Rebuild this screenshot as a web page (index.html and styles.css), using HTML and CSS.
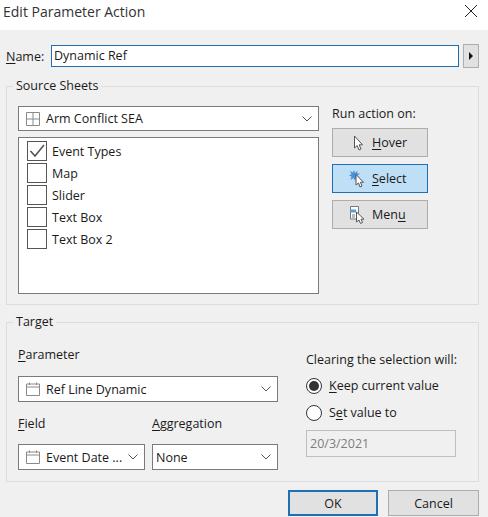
FILE: index.html
```html
<!DOCTYPE html>
<html>
<head>
	<meta charset="UTF-8">
	<title>Edit Parameter Action</title>
	<link rel="stylesheet" href="styles.css">
</head>
<body>
	<div class="titlebar">
		<span class="title">Edit Parameter Action</span>
		<svg class="close" width="14" height="14" viewBox="0 0 14 14"><path d="M1 1L13 13M13 1L1 13" stroke="#222" stroke-width="1" fill="none"/></svg>
	</div>

	<div class="dialog">

		<div class="name-row">
			<label class="name-label"><u>N</u>ame:</label>
			<div class="name-input">Dynamic Ref</div>
			<div class="name-arrow"><svg width="6" height="8" viewBox="0 0 6 8"><path d="M1 0L5 4L1 8Z" fill="#111"/></svg></div>
		</div>

		<fieldset class="group source">
			<legend>Source Sheets</legend>
			<div class="source-left">
				<div class="combo combo-sheet">
					<svg class="combo-icon" width="14" height="14" viewBox="0 0 14 14"><path d="M.5.5H13.500V13.500H.5ZM7 .5V13.500M.5 7H13.500" stroke="#8a8a8a" fill="none"/></svg>
					<span class="combo-text">Arm Conflict SEA</span>
					<svg class="chevron" width="10" height="6" viewBox="0 0 10 6"><path d="M.5 .5L5 5L9.500 .5" stroke="#555" fill="none"/></svg>
				</div>
				<div class="list">
					<div class="list-row">
						<span class="check"><svg width="18" height="18" viewBox="0 0 18 18"><path d="M2.500 9L7 14L16 3" stroke="#555" stroke-width="1.600" fill="none"/></svg></span>
						<span>Event Types</span>
					</div>
					<div class="list-row"><span class="check"></span><span>Map</span></div>
					<div class="list-row"><span class="check"></span><span>Slider</span></div>
					<div class="list-row"><span class="check"></span><span>Text Box</span></div>
					<div class="list-row"><span class="check"></span><span>Text Box 2</span></div>
				</div>
			</div>
			<div class="source-right">
				<div class="run-label">Run action on:</div>
				<div class="btn run-btn">
					<svg class="run-icon" width="18" height="18" viewBox="0 0 18 18"><path d="M5.500 2V14L8.200 11.500L10 16L12 15L10.200 10.800H13.500Z" fill="#fff" stroke="#555"/></svg>
					<span><u>H</u>over</span>
				</div>
				<div class="btn run-btn active">
					<svg class="run-icon" width="18" height="18" viewBox="0 0 18 18"><path d="M5 0L6 3L8.500 .5L8 3.500L11 3.500L8.500 5.500L10.500 8L7.500 7.500L6 10.500L4.500 8L1.500 10L2.500 6.500L0 5.500L2.500 4L1 1L4 2.500Z" fill="#4a8fd8"/><path d="M7 4.500V15L9.500 13L11 17L13 16L11.400 12.300H14.500Z" fill="#fff" stroke="#555"/></svg>
					<span><u>S</u>elect</span>
				</div>
				<div class="btn run-btn">
					<svg class="run-icon" width="18" height="18" viewBox="0 0 18 18"><path d="M1.500 .5H9.500V13H1.500Z" fill="#fff" stroke="#777"/><path d="M1 3.500H7V6.500H1Z" fill="#5a9be0"/><path d="M3 9H6M3 11H6" stroke="#777"/><path d="M7.500 6V16L10 14L11.500 17.500L13.500 16.500L12 13.200H15Z" fill="#fff" stroke="#555"/></svg>
					<span>Men<u>u</u></span>
				</div>
			</div>
		</fieldset>

		<fieldset class="group target">
			<legend>Target</legend>
			<div class="target-left">
				<div class="field-label"><u>P</u>arameter</div>
				<div class="combo combo-param">
					<svg class="combo-icon" width="14" height="14" viewBox="0 0 14 14"><path d="M.5 2H13.500V13.500H.5ZM.5 5H13.500M3.500 .5V3M10.500 .5V3" stroke="#8a8a8a" fill="none"/></svg>
					<span class="combo-text">Ref Line Dynamic</span>
					<svg class="chevron" width="10" height="6" viewBox="0 0 10 6"><path d="M.5 .5L5 5L9.500 .5" stroke="#555" fill="none"/></svg>
				</div>
				<div class="field-row">
					<div class="field-col field-col-date">
						<div class="field-label field-label-low"><u>F</u>ield</div>
						<div class="combo">
							<svg class="combo-icon" width="14" height="14" viewBox="0 0 14 14"><path d="M.5 2H13.500V13.500H.5ZM.5 5H13.500M3.500 .5V3M10.500 .5V3" stroke="#8a8a8a" fill="none"/></svg>
							<span class="combo-text">Event Date ...</span>
							<svg class="chevron" width="10" height="6" viewBox="0 0 10 6"><path d="M.5 .5L5 5L9.500 .5" stroke="#555" fill="none"/></svg>
						</div>
					</div>
					<div class="field-col field-col-agg">
						<div class="field-label field-label-low"><u>A</u>ggregation</div>
						<div class="combo combo-plain">
							<span class="combo-text">None</span>
							<svg class="chevron" width="10" height="6" viewBox="0 0 10 6"><path d="M.5 .5L5 5L9.500 .5" stroke="#555" fill="none"/></svg>
						</div>
					</div>
				</div>
			</div>
			<div class="target-right">
				<div class="clear-label">Clearing the selection will:</div>
				<div class="radio-row"><span class="radio on"></span><span><u>K</u>eep current value</span></div>
				<div class="radio-row"><span class="radio"></span><span>S<u>e</u>t value to</span></div>
				<div class="date-input">20/3/2021</div>
			</div>
		</fieldset>

		<div class="footer">
			<div class="btn foot-btn default">OK</div>
			<div class="btn foot-btn">Cancel</div>
		</div>

	</div>
</body>
</html>
```

FILE: styles.css
```css
html {
	height: 100%;
	margin: 0;
}

body {
	margin: 0;
	width: 488px;
	height: 517px;
	overflow: hidden;
	background: #f0f0f0;
	color: #1a1a1a;
	font-family: "Open Sans", "Liberation Sans", sans-serif;
	font-size: 12.5px;
}

u {
	text-underline-offset: 2px;
}

.titlebar {
	height: 30px;
	background: #fff;
	display: flex;
	align-items: center;
	justify-content: space-between;
	padding: 0 10px 8px 3px;
	box-sizing: border-box;
}

.title {
	font-size: 14px;
	color: #333;
}

.dialog {
	padding: 14px 9px 0 6px;
}

.name-row {
	display: flex;
	align-items: center;
	height: 24px;
}

.name-label {
	width: 45px;
}

.name-input {
	width: 408px;
	height: 22px;
	line-height: 20px;
	box-sizing: border-box;
	border: 1px solid #1f6fb5;
	background: #fff;
	padding-left: 2px;
}

.name-arrow {
	width: 16px;
	height: 24px;
	margin-left: 4px;
	box-sizing: border-box;
	border: 1px solid #adadad;
	background: #e1e1e1;
	display: flex;
	align-items: center;
	justify-content: center;
}

.group {
	margin: 0;
	padding: 0 11px;
	width: 473px;
	min-width: 0;
	box-sizing: border-box;
	border: 1px solid #dcdcdc;
	display: flex;
}

.group legend {
	padding: 0 3px;
	margin-left: -5px;
	line-height: 16px;
}

.source {
	height: 227px;
	margin-top: 10px;
	padding-top: 12px;
}

.target {
	height: 168px;
	margin-top: 9px;
	padding-top: 0;
}

.source-left {
	width: 301px;
}

.combo {
	height: 26px;
	box-sizing: border-box;
	border: 1px solid #7a7a7a;
	background: #fff;
	display: flex;
	align-items: center;
	padding: 0 7px;
}

.combo-sheet {
	height: 25px;
}

.combo-icon {
	margin-right: 6px;
	flex: none;
}

.combo-text {
	flex: 1;
	white-space: nowrap;
}

.combo-plain {
	padding-left: 3px;
}

.chevron {
	flex: none;
	margin-right: -1px;
}

.list {
	height: 157px;
	margin-top: 6px;
	box-sizing: border-box;
	border: 1px solid #7a7a7a;
	background: #fff;
	padding-top: 2px;
}

.list-row {
	height: 22px;
	display: flex;
	align-items: center;
	padding-left: 8px;
}

.check {
	width: 20px;
	height: 20px;
	box-sizing: border-box;
	border: 1px solid #555;
	background: #fff;
	margin-right: 5px;
	display: flex;
	align-items: center;
	justify-content: center;
}

.source-right {
	width: 96px;
	margin-left: 13px;
}

.run-label {
	height: 22px;
	line-height: 16px;
}

.btn {
	box-sizing: border-box;
	border: 1px solid #adadad;
	background: #e1e1e1;
	display: flex;
	align-items: center;
}

.run-btn {
	height: 29px;
	margin-bottom: 7px;
	padding-left: 16px;
}

.run-icon {
	margin-right: 5px;
	flex: none;
}

.active {
	background: #bfdff7;
	border-color: #1f6fb5;
}

.target-left {
	width: 260px;
	flex: none;
}

.field-label {
	height: 16px;
	line-height: 16px;
	margin: 17px 0 13px;
}

.field-label-low {
	margin: 14px 0 12px;
}

.combo-param {
	height: 26px;
}

.field-row {
	display: flex;
	gap: 7px;
}

.field-col-date {
	width: 127px;
}

.field-col-agg {
	width: 126px;
}

.target-right {
	margin-left: 28px;
	width: 150px;
	flex: none;
	padding-top: 22px;
}

.clear-label {
	height: 16px;
	line-height: 16px;
	white-space: nowrap;
}

.radio-row {
	display: flex;
	align-items: center;
	height: 17px;
	margin-top: 9px;
}

.radio {
	width: 16px;
	height: 16px;
	box-sizing: border-box;
	border: 1px solid #333;
	border-radius: 50%;
	background: #fff;
	margin-right: 7px;
	display: flex;
	align-items: center;
	justify-content: center;
}

.radio.on::after {
	content: "";
	width: 10px;
	height: 10px;
	border-radius: 50%;
	background: #333;
}

.radio-row + .radio-row {
	margin-top: 10px;
}

.date-input {
	width: 150px;
	height: 27px;
	line-height: 25px;
	margin-top: 9px;
	box-sizing: border-box;
	border: 1px solid #bfbfbf;
	color: #7d7d7d;
	padding-left: 3px;
}

.footer {
	display: flex;
	justify-content: flex-end;
	gap: 10px;
	margin-top: 8px;
}

.foot-btn {
	width: 91px;
	height: 26px;
	justify-content: center;
}

.default {
	width: 90px;
	border: 2px solid #1f6fb5;
}
```
